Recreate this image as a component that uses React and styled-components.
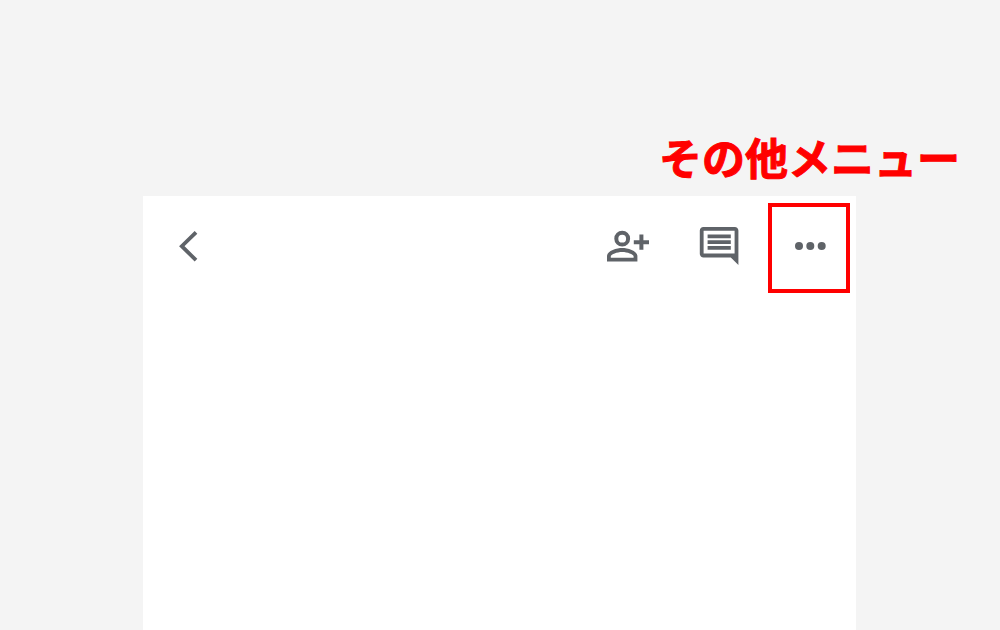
import React from "react";
import styled, { createGlobalStyle } from "styled-components";

const GlobalStyle = createGlobalStyle`
  * {
    box-sizing: border-box;
  }

  body {
    margin: 0;
    background-color: #f4f4f4;
    font-family: "Noto Sans CJK JP", sans-serif;
  }
`;

const Container = styled.div`
  display: flex;
  flex-direction: column;
  min-height: 100vh;
`;

const Caption = styled.header`
  padding: 124px 40px 8px;
  text-align: right;
`;

const CaptionText = styled.label`
  display: block;
  color: #ff0000;
  font-size: 43px;
  font-weight: 700;
  line-height: 64px;
  -webkit-text-stroke: 1px #ff0000;
`;

const Sheet = styled.main`
  flex: 1;
  margin: 0 14.4% 0 14.3%;
  background-color: #ffffff;
`;

const Toolbar = styled.nav`
  display: flex;
  justify-content: space-between;
  padding: 7px 6px 0 4px;
`;

const Actions = styled.div`
  display: flex;
  gap: 9px;
`;

const IconButton = styled.button`
  display: flex;
  align-items: center;
  justify-content: center;
  width: 82px;
  height: 90px;
  padding: 0;
  border: 4px solid ${({ $marked }) => ($marked ? "#ff0000" : "transparent")};
  background: none;
  color: #5f6368;
  cursor: pointer;
`;

const Icon = styled.svg.attrs({ viewBox: "0 0 48 48", "aria-hidden": true })`
  width: 48px;
  height: 48px;
  fill: currentColor;
`;

const App = () => {
  return (
    <Container>
      <GlobalStyle />
      <Caption>
        <CaptionText htmlFor="more">その他メニュー</CaptionText>
      </Caption>
      <Sheet>
        <Toolbar>
          <IconButton type="button" aria-label="戻る">
            <Icon>
              <path
                d="M32 8.3 17.8 22.2 32 36.2"
                fill="none"
                stroke="currentColor"
                strokeWidth="3.8"
              />
            </Icon>
          </IconButton>
          <Actions>
            <IconButton type="button" aria-label="共有">
              <Icon>
                <circle
                  cx="19.2"
                  cy="14.7"
                  r="5.9"
                  fill="none"
                  stroke="currentColor"
                  strokeWidth="4"
                />
                <path d="M36.4 10.6h4v5.6h5.6v4h-5.6v5.6h-4v-5.6h-5.6v-4h5.6z" />
                <path
                  fillRule="evenodd"
                  d="M4 37.5v-5.3c0-5.5 10-8.2 15.2-8.2s15.2 2.7 15.2 8.2v5.3zM7.8 33.7h22.8v-1.5c0-1.6-5.8-4.3-11.4-4.3S7.8 30.6 7.8 32.2z"
                />
              </Icon>
            </IconButton>
            <IconButton type="button" aria-label="コメント">
              <Icon>
                <path
                  fillRule="evenodd"
                  d="M9.4 3h31.4c2 0 3.6 1.6 3.6 3.6V41l-7.6-7.6H9.4c-2 0-3.6-1.6-3.6-3.6V6.6C5.8 4.6 7.4 3 9.4 3zM9.6 6.8v22.8h31V6.8z"
                />
                <path d="M13.6 10.4h23.2v3.8H13.6zM13.6 16.2h23.2V20H13.6zM13.6 22h23.2v3.8H13.6z" />
              </Icon>
            </IconButton>
            <IconButton
              type="button"
              id="more"
              aria-label="その他メニュー"
              $marked
            >
              <Icon>
                <circle cx="14" cy="22" r="4" />
                <circle cx="25.3" cy="22" r="4" />
                <circle cx="36.7" cy="22" r="4" />
              </Icon>
            </IconButton>
          </Actions>
        </Toolbar>
      </Sheet>
    </Container>
  );
};

export default App;
